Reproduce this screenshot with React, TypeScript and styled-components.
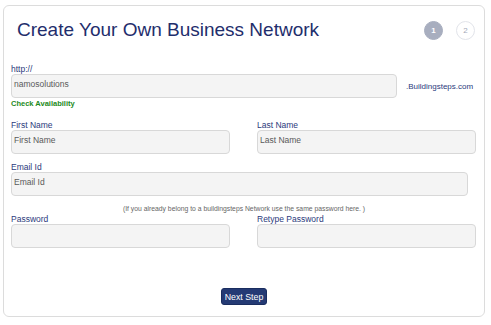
import styled, { createGlobalStyle } from "styled-components";

const GlobalStyle = createGlobalStyle`
  html, body {
    margin: 0;
    padding: 0;
    background: #ffffff;
  }
  body {
    font-family: "Liberation Sans", Arial, sans-serif;
  }
`;

const StyledCard = styled.div`
  box-sizing: border-box;
  width: 482px;
  height: 312px;
  margin: 5px 0 0 3px;
  padding: 0 7px 0 7px;
  border: 1px solid #dcdcdc;
  border-radius: 6px;
  background: #fff;
  display: flex;
  flex-direction: column;
`;

const StyledHeader = styled.div`
  display: flex;
  justify-content: space-between;
  align-items: center;
  padding: 13px 2px 0 6px;
  margin-bottom: 23px;
`;

const StyledTitle = styled.h1`
  margin: 0;
  font-size: 19px;
  line-height: 22px;
  font-weight: normal;
  color: #1f2e6c;
`;

const StyledSteps = styled.div`
  display: flex;
  gap: 13px;
`;

const StyledStep = styled.span<{ $active?: boolean }>`
  box-sizing: border-box;
  width: 19px;
  height: 19px;
  border-radius: 50%;
  display: flex;
  align-items: center;
  justify-content: center;
  font-size: 8px;
  font-weight: ${({ $active }) => ($active ? "bold" : "normal")};
  color: ${({ $active }) => ($active ? "#ffffff" : "#a3a8b8")};
  background: ${({ $active }) => ($active ? "#a8aebf" : "#ffffff")};
  border: 1px solid ${({ $active }) => ($active ? "#a8aebf" : "#e2e4ea")};
`;

const StyledField = styled.div<{ $mt?: number }>`
  display: flex;
  flex-direction: column;
  margin-top: ${({ $mt }) => $mt ?? 0}px;
`;

const StyledLabel = styled.label`
  font-size: 8.5px;
  line-height: 10px;
  height: 10px;
  color: #2b3a7c;
`;

const StyledInput = styled.input<{ $width?: number }>`
  box-sizing: border-box;
  width: ${({ $width }) => ($width ? `${$width}px` : "100%")};
  height: 24px;
  margin: 0;
  padding: 0 0 4px 2px;
  border: 1px solid #d8d8d8;
  border-radius: 4px;
  background: #f4f4f4;
  font-family: "Liberation Sans", Arial, sans-serif;
  font-size: 8.5px;
  color: #5a5a5a;
  outline: none;

  &::placeholder {
    color: #5a5a5a;
  }
`;

const StyledUrlRow = styled.div`
  display: flex;
  align-items: center;
  gap: 9px;
`;

const StyledSuffix = styled.span`
  font-size: 8px;
  color: #2b3a7c;
`;

const StyledCheck = styled.a`
  margin-top: 1px;
  font-size: 7.5px;
  line-height: 10px;
  font-weight: bold;
  color: #1b8a1b;
`;

const StyledGrid = styled.div<{ $mt?: number }>`
  display: grid;
  grid-template-columns: 219px 219px;
  column-gap: 27px;
  margin-top: ${({ $mt }) => $mt ?? 0}px;
`;

const StyledNote = styled.p`
  margin: 8px 0 0;
  font-size: 6.8px;
  line-height: 10px;
  height: 10px;
  text-align: center;
  color: #666;
`;

const StyledFooter = styled.div`
  display: flex;
  justify-content: center;
  margin-top: 40px;
`;

const StyledButton = styled.button`
  box-sizing: border-box;
  width: 46px;
  height: 17px;
  padding: 0;
  border: 1px solid #1a2d5f;
  border-radius: 3px;
  background: #243a74;
  color: #fff;
  font-family: "Liberation Sans", Arial, sans-serif;
  font-size: 8.8px;
  cursor: pointer;
`;

export default function App() {
  return (
    <>
      <GlobalStyle />
      <StyledCard>
        <StyledHeader>
          <StyledTitle>Create Your Own Business Network</StyledTitle>
          <StyledSteps>
            <StyledStep $active>1</StyledStep>
            <StyledStep>2</StyledStep>
          </StyledSteps>
        </StyledHeader>

        <StyledField>
          <StyledLabel>http://</StyledLabel>
          <StyledUrlRow>
            <StyledInput $width={386} defaultValue="namosolutions" />
            <StyledSuffix>.Buildingsteps.com</StyledSuffix>
          </StyledUrlRow>
          <StyledCheck>Check Availability</StyledCheck>
        </StyledField>

        <StyledGrid $mt={11}>
          <StyledField>
            <StyledLabel>First Name</StyledLabel>
            <StyledInput placeholder="First Name" />
          </StyledField>
          <StyledField>
            <StyledLabel>Last Name</StyledLabel>
            <StyledInput placeholder="Last Name" />
          </StyledField>
        </StyledGrid>

        <StyledField $mt={8}>
          <StyledLabel>Email Id</StyledLabel>
          <StyledInput $width={457} placeholder="Email Id" />
        </StyledField>

        <StyledNote>
          (If you already belong to a buildingsteps Network use the same password here. )
        </StyledNote>

        <StyledGrid>
          <StyledField>
            <StyledLabel>Password</StyledLabel>
            <StyledInput type="password" />
          </StyledField>
          <StyledField>
            <StyledLabel>Retype Password</StyledLabel>
            <StyledInput type="password" />
          </StyledField>
        </StyledGrid>

        <StyledFooter>
          <StyledButton>Next Step</StyledButton>
        </StyledFooter>
      </StyledCard>
    </>
  );
}
